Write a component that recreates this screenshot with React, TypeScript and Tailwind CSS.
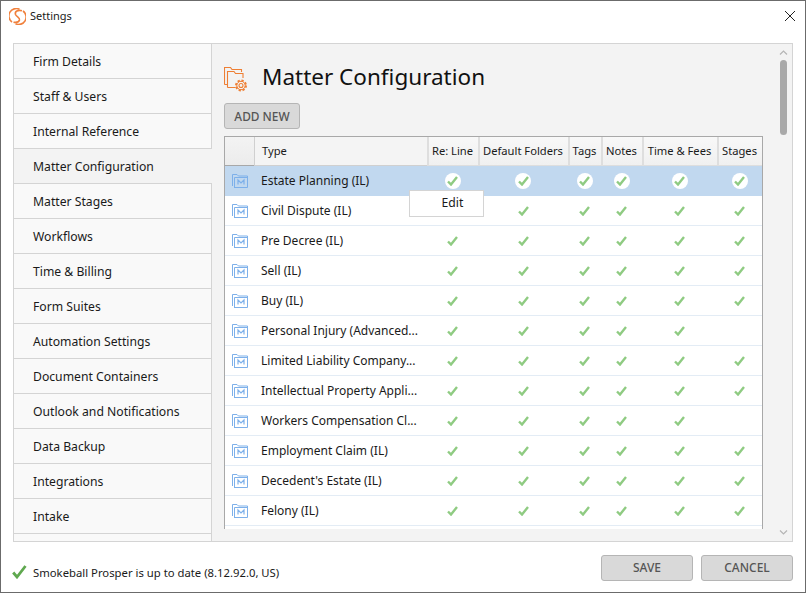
import { Fragment } from "react";

const menu = [
  "Firm Details",
  "Staff & Users",
  "Internal Reference",
  "Matter Configuration",
  "Matter Stages",
  "Workflows",
  "Time & Billing",
  "Form Suites",
  "Automation Settings",
  "Document Containers",
  "Outlook and Notifications",
  "Data Backup",
  "Integrations",
  "Intake",
];

const matters = [
  { name: "Estate Planning (IL)", stages: true },
  { name: "Civil Dispute (IL)", stages: true },
  { name: "Pre Decree (IL)", stages: true },
  { name: "Sell (IL)", stages: true },
  { name: "Buy (IL)", stages: true },
  { name: "Personal Injury (Advanced...", stages: false },
  { name: "Limited Liability Company...", stages: true },
  { name: "Intellectual Property Appli...", stages: true },
  { name: "Workers Compensation Cl...", stages: false },
  { name: "Employment Claim (IL)", stages: true },
  { name: "Decedent's Estate (IL)", stages: true },
  { name: "Felony (IL)", stages: true },
  { name: "", stages: false },
];

const columns = ["Re: Line", "Default Folders", "Tags", "Notes", "Time & Fees", "Stages"];

function Logo() {
  return (
    <svg width="17" height="17" viewBox="0 0 17 17" fill="none" stroke="#f0803c" strokeWidth="1.6">
      <path d="M10.5 1.3A7.4 7.4 0 0 0 3 14" />
      <path d="M6.5 15.7A7.4 7.4 0 0 0 14 3" />
      <path d="M13 2.8C9 1.5 5.5 3.5 6.5 6.5C7.5 9 11 9.5 10.5 12C10 14 7 14.6 4.5 14.2" />
    </svg>
  );
}

function FolderGear() {
  return (
    <svg width="25" height="26" viewBox="0 0 25 26" fill="none" stroke="#ee7f34" strokeWidth="1.1">
      <path d="M.5 17.5V.5H6.5L8 2.5H17.5V5" />
      <path d="M3.5 20.5V4.5H10L11.5 6.5H19V11" />
      <path d="M.5 17.5H3.5M3.5 20.5H11.5" />
      <circle cx="17" cy="18.5" r="5" strokeWidth="2" strokeDasharray="2.2 1.7" />
      <circle cx="17" cy="18.5" r="4.2" strokeWidth="1" />
      <circle cx="17" cy="18.5" r="2" />
    </svg>
  );
}

function FolderM() {
  return (
    <svg width="16" height="14" viewBox="0 0 16 14" fill="none" stroke="#7db0ea" strokeWidth="1">
      <path d="M.5 12V.5H5L6.5 2H15.5V13.5H2" />
      <path d="M2.5 13.5V3.5H15" />
      <path d="M6 10.5V6L9 9L12 6V10.5" strokeWidth="1.2" />
    </svg>
  );
}

function Check({ selected }: { selected: boolean }) {
  const mark = (
    <svg width="11" height="10" viewBox="0 0 11 10" fill="none" stroke="#8fcb82" strokeWidth="2.4">
      <path d="M1 5.5L4 8.5L10 1" />
    </svg>
  );
  if (!selected) return mark;
  return <span className="flex h-4 w-4 items-center justify-center rounded-full bg-white">{mark}</span>;
}

export default function App() {
  return (
    <div className="flex h-[593px] w-[806px] flex-col overflow-hidden border border-[#6b6b6b] bg-white font-['Noto_Sans',sans-serif] text-[12.2px] text-[#1a1a1a]">
      {/* title bar */}
      <div className="flex h-[42px] shrink-0 items-center pl-[8px] pr-[9px] pb-[12px]">
        <Logo />
        <span className="ml-[4px] text-[11px]">Settings</span>
        <svg className="ml-auto" width="12" height="12" viewBox="0 0 12 12" stroke="#222" strokeWidth="1">
          <path d="M1 1L11 11M11 1L1 11" />
        </svg>
      </div>

      <div className="mx-[12px] flex h-[499px] shrink-0 border border-[#d4d4d4] bg-[#f3f3f3]">
        {/* left menu */}
        <div className="w-[198px] shrink-0 bg-[#f9f9f9]">
          {menu.map((item) => (
            <div
              key={item}
              className={
                item === "Matter Configuration"
                  ? "flex h-[35px] items-center border-b border-[#d4d4d4] bg-[#f3f3f3] pl-[19px] pt-[2px]"
                  : "flex h-[35px] items-center border-b border-r border-[#d4d4d4] pl-[19px] pt-[2px]"
              }
            >
              {item}
            </div>
          ))}
          <div className="h-[7px] border-r border-[#d4d4d4]" />
        </div>

        {/* main panel */}
        <div className="relative flex min-w-0 flex-1 overflow-hidden">
          <div className="w-[552px] shrink-0 pl-[12px]">
            <div className="flex h-[59px] items-end pb-[10px]">
              <FolderGear />
              <h1 className="ml-[13px] text-[22.5px] leading-[32px] text-[#111]">Matter Configuration</h1>
            </div>
            <button
              type="button"
              className="h-[26px] w-[76px] rounded-[3px] border border-[#b5b5b5] bg-[#d9d9d9] pt-[1px] text-[11.9px] font-medium text-[#555]"
            >
              ADD NEW
            </button>
            <div className="mt-[7px] h-[393px] w-[539px] overflow-hidden border-x border-t border-[#a8a8a8] bg-white">
              <div className="grid grid-cols-[29px_173px_51px_90px_33px_41px_75px_45px]">
                <div className="h-[29px] border-b border-[#a8a8a8] bg-gradient-to-b from-[#f3f3f3] to-[#ececec]" />
                <div className="flex h-[29px] items-center border-b border-l border-[#d0d0d0] bg-[#f4f4f4] pl-[7px] pt-[1px] text-[11.2px]">
                  Type
                </div>
                {columns.map((col) => (
                  <div
                    key={col}
                    className="flex h-[29px] items-center justify-center border-b border-l-2 border-[#dedede] bg-gradient-to-b from-[#f8f8f8] to-[#f0f0f0] pr-[2px] pt-[1px] text-[11.2px] whitespace-nowrap"
                  >
                    {col}
                  </div>
                ))}
                {matters.map((m, i) => {
                  const selected = i === 0;
                  const cell = selected
                    ? "flex h-[30px] items-center border-b border-[#c1d8ef] bg-[#c1d8ef]"
                    : "flex h-[30px] items-center border-b border-[#e3ecf5]";
                  return (
                    <Fragment key={i}>
                      <div className={cell + " pl-[7px]"}>{m.name && <FolderM />}</div>
                      <div className={cell + " pl-[7px] pt-[1px] text-[12px] whitespace-nowrap"}>{m.name}</div>
                      {columns.map((col) => (
                        <div key={col} className={cell + " justify-center"}>
                          {m.name && (col !== "Stages" || m.stages) && <Check selected={selected} />}
                        </div>
                      ))}
                    </Fragment>
                  );
                })}
              </div>
            </div>
          </div>

          {/* scrollbar */}
          <div className="flex flex-1 flex-col items-center pl-[10px] pt-[6px]">
            <svg width="9" height="5" viewBox="0 0 9 5" fill="none" stroke="#b5b5b5" strokeWidth="1.2">
              <path d="M1 4.5L4.5 1L8 4.5" />
            </svg>
            <div className="mt-[5px] h-[75px] w-[7px] rounded-full bg-[#a9a9a9]" />
            <svg className="mt-auto mb-[6px]" width="9" height="5" viewBox="0 0 9 5" fill="none" stroke="#b5b5b5" strokeWidth="1.2">
              <path d="M1 .5L4.5 4L8 .5" />
            </svg>
          </div>

          {/* context menu */}
          <div className="absolute left-[197px] top-[146px] flex h-[27px] w-[75px] items-center justify-center border border-[#d4d4d4] bg-white pl-[12px]">
            Edit
          </div>
        </div>
      </div>

      {/* footer */}
      <div className="flex flex-1 items-center pl-[11px] pr-[12px] pt-[1px]">
        <svg className="mt-[8px]" width="15" height="14" viewBox="0 0 15 14" fill="none" stroke="#5fa84f" strokeWidth="2.8">
          <path d="M1.2 7.5L5 12L13.5 1" />
        </svg>
        <span className="ml-[6px] mt-[12px] text-[11.3px]">Smokeball Prosper is up to date (8.12.92.0, US)</span>
        <button
          type="button"
          className="ml-auto h-[26px] w-[92px] rounded-[3px] border border-[#b5b5b5] bg-[#d9d9d9] text-[12px] font-medium text-[#555]"
        >
          SAVE
        </button>
        <button
          type="button"
          className="ml-[8px] h-[26px] w-[92px] rounded-[3px] border border-[#b5b5b5] bg-[#d9d9d9] text-[12px] font-medium text-[#555]"
        >
          CANCEL
        </button>
      </div>
    </div>
  );
}
